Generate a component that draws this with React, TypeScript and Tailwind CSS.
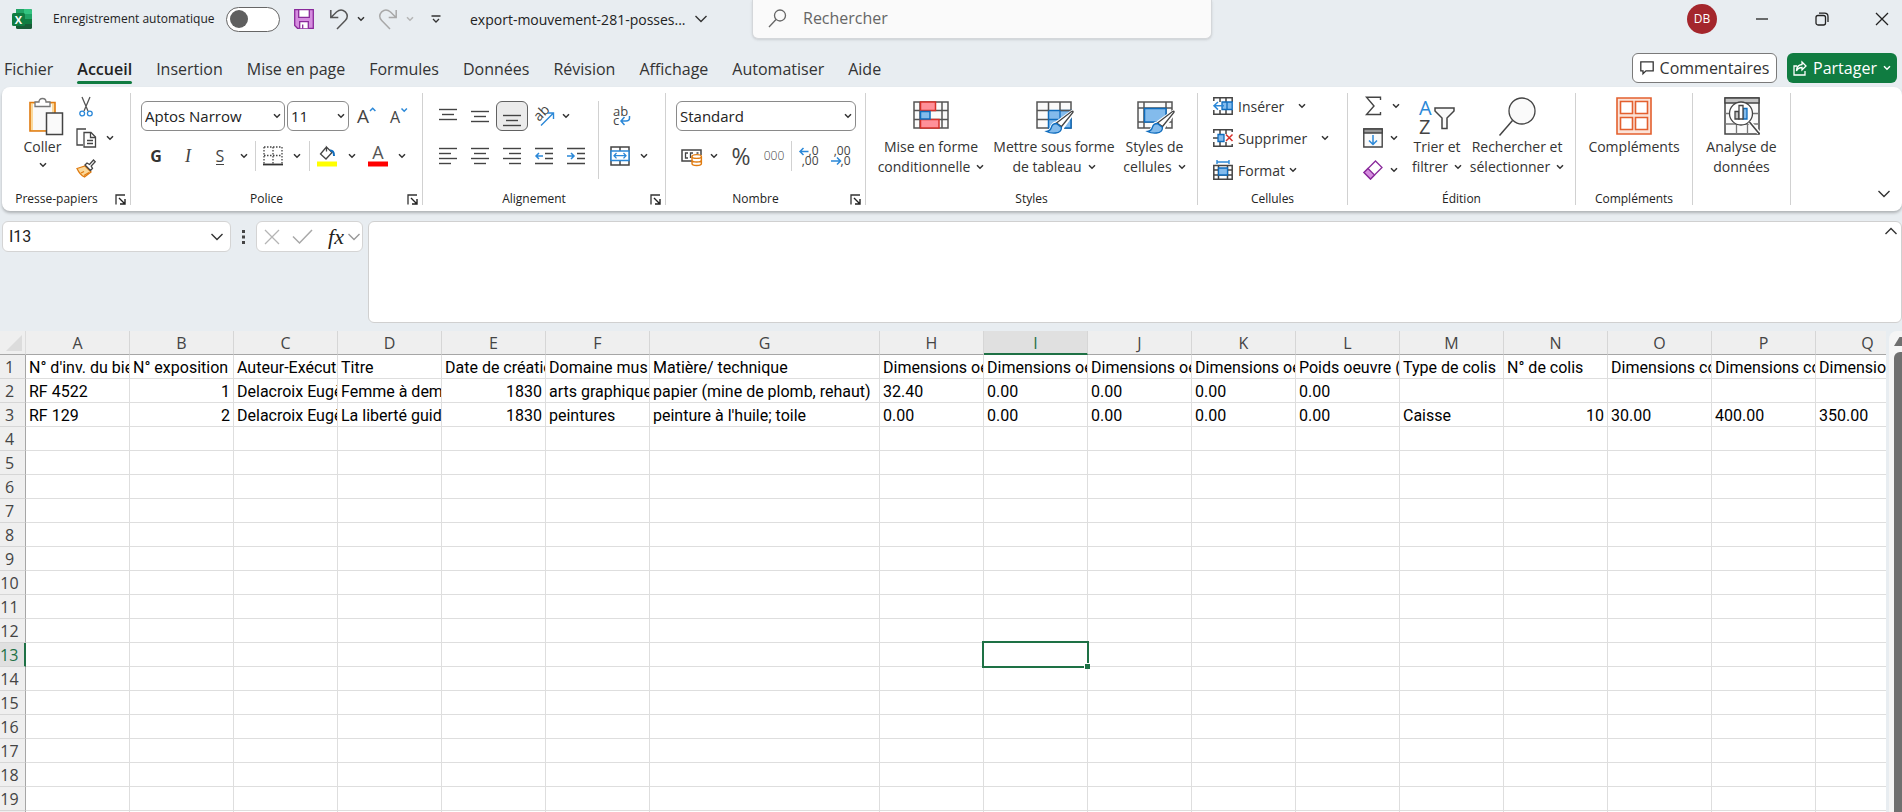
import { ReactNode } from "react";

const COLUMNS = ["A", "B", "C", "D", "E", "F", "G", "H", "I", "J", "K", "L", "M", "N", "O", "P", "Q"];
const ROW_COUNT = 20;
const ACTIVE_COLUMN = "I";
const ACTIVE_ROW = 13;

const TABS = ["Fichier", "Accueil", "Insertion", "Mise en page", "Formules", "Données", "Révision", "Affichage", "Automatiser", "Aide"];

// Cells by row number, in column order. Numbers are right aligned.
const DATA: Record<number, (string | number)[]> = {
  1: [
    "N° d'inv. du bien", "N° exposition", "Auteur-Exécutant", "Titre", "Date de création", "Domaine mus",
    "Matière/ technique", "Dimensions oeuvre", "Dimensions oeuvre", "Dimensions oeuvre", "Dimensions oeuvre",
    "Poids oeuvre (kg)", "Type de colis", "N° de colis", "Dimensions colis", "Dimensions colis", "Dimensions colis",
  ],
  2: [
    "RF 4522", 1, "Delacroix Eugène", "Femme à demi", 1830, "arts graphiques", "papier (mine de plomb, rehaut)",
    "32.40", "0.00", "0.00", "0.00", "0.00", "", "", "", "", "",
  ],
  3: [
    "RF 129", 2, "Delacroix Eugène", "La liberté guidant", 1830, "peintures", "peinture à l'huile; toile",
    "0.00", "0.00", "0.00", "0.00", "0.00", "Caisse", 10, "30.00", "400.00", "350.00",
  ],
};

function Icon({ w, h, children, className = "" }: { w: number; h: number; children: ReactNode; className?: string }) {
  return (
    <svg width={w} height={h} viewBox={`0 0 ${w} ${h}`} fill="none" stroke="#444" strokeWidth="1.3" aria-hidden="true" className={`shrink-0 overflow-visible ${className}`}>
      {children}
    </svg>
  );
}

function Chevron({ color = "#333" }: { color?: string }) {
  return (
    <Icon w={8} h={6}>
      <path d="M1 1.2 4 4.2 7 1.2" stroke={color} strokeWidth="1.5" />
    </Icon>
  );
}

function BigChevron({ color = "#333", up = false }: { color?: string; up?: boolean }) {
  return (
    <Icon w={14} h={8}>
      <path d={up ? "M1.5 7 7 1.5 12.5 7" : "M1.5 1 7 6.5 12.5 1"} stroke={color} strokeWidth="1.4" />
    </Icon>
  );
}

function Tool({ label, className = "w-8", children }: { label: string; className?: string; children: ReactNode }) {
  return (
    <button type="button" aria-label={label} className={`flex h-[30px] shrink-0 items-center justify-center ${className}`}>
      {children}
    </button>
  );
}

function Group({ label, width, launcher = false, className = "", children }: { label?: string; width: string; launcher?: boolean; className?: string; children: ReactNode }) {
  return (
    <>
      <section className={`flex shrink-0 flex-col pb-1 ${width}`}>
        <div className={`flex flex-1 ${className}`}>{children}</div>
        <div className="flex h-4 items-center text-[12px] leading-4 text-[#222]">
          <span className="flex-1 text-center">{label}</span>
          {launcher && (
            <button type="button" aria-label={`Paramètres ${label}`} className="flex w-5 justify-center">
              <Icon w={11} h={11}>
                <path d="M1 10.5V1h9" stroke="#333" />
                <path d="M4 4l5.5 5.5M10 5v5H5" stroke="#222" strokeWidth="1.4" />
              </Icon>
            </button>
          )}
        </div>
      </section>
      <div className="my-1.5 w-px shrink-0 bg-[#d1d1d1]" />
    </>
  );
}

function BigButton({ icon, lines, chevron = false, className = "" }: { icon: ReactNode; lines: string[]; chevron?: boolean; className?: string }) {
  return (
    <button type="button" className={`flex shrink-0 flex-col items-center whitespace-nowrap text-[14px] leading-5 text-[#333] ${className}`}>
      <span className="flex h-10 items-start justify-center">{icon}</span>
      {lines.map((line, i) => (
        <span key={line} className="flex items-center justify-center gap-1.5">
          {line}
          {chevron && i === lines.length - 1 && <Chevron />}
        </span>
      ))}
    </button>
  );
}

function Dropdown({ label, value, className }: { label: string; value: string; className: string }) {
  return (
    <div className={`relative h-[30px] ${className}`}>
      <select aria-label={label} defaultValue={value} className="h-full w-full appearance-none rounded-md border border-[#8a8a8a] bg-white pl-[3px] text-[15px] text-[#222] outline-none">
        <option>{value}</option>
      </select>
      <span className="pointer-events-none absolute top-3 right-1">
        <Chevron />
      </span>
    </div>
  );
}

function Lines({ rows, y = 0 }: { rows: [number, number][]; y?: number }) {
  return (
    <Icon w={18} h={20}>
      {rows.map(([start, end], i) => (
        <path key={i} d={`M${start} ${y + i * 5 + 2.5}H${end}`} stroke="#444" strokeWidth="1.4" />
      ))}
    </Icon>
  );
}

function BrushOverlay() {
  return (
    <>
      <path d="M20 26 36 14.5q2.500-1.500 1.500 1L27 30q-1 6-6.500 6.500-6 .5-10-1.500 4-1 4.500-4Q17 26 20 26Z" fill="#fff" stroke="#fff" strokeWidth="3" />
      <path d="M20.500 26 35.500 14.500q2.200-1 1.400 1L25.500 29.500Z" fill="#fff" stroke="#444" />
      <path d="M20.500 26.500q-4 0-5 3.500-1 4-5 4.500 4 2 9 1.500 6-.5 6-5.500Z" fill="#83bbec" stroke="#0f6cbd" />
    </>
  );
}

function TitleBar() {
  return (
    <header className="flex h-10 shrink-0 items-start text-[12px] text-[#222]">
      <div className="flex h-[38px] w-[752px] shrink-0 items-center pl-3">
        <Icon w={20} h={21}>
          <g stroke="none">
            <rect x="4" y="0" width="16" height="20" rx="1.500" fill="#185c37" />
            <path d="M4 0h8v7H4z" fill="#21a366" />
            <path d="M12 0h6.500Q20 0 20 1.500V5h-8z" fill="#33c481" />
            <path d="M4 5h8v5H4z" fill="#107c41" />
            <path d="M12 5h8v5h-8z" fill="#21a366" />
            <path d="M12 10h8v5h-8z" fill="#107c41" />
            <rect x="0" y="4" width="13" height="13" rx="1.500" fill="#107c41" />
            <text x="6.500" y="14.500" textAnchor="middle" fontSize="11" fontWeight="700" fill="#fff">X</text>
          </g>
        </Icon>
        <label htmlFor="autosave" className="ml-[21px] w-[173px] whitespace-nowrap">Enregistrement automatique</label>
        <input id="autosave" type="checkbox" role="switch" className="sr-only" />
        <label htmlFor="autosave" aria-label="Enregistrement automatique" className="flex h-[25px] w-[54px] items-center rounded-full border border-[#666] bg-white pl-[3px]">
          <span className="h-[18px] w-[18px] rounded-full bg-[#5f5f5f]" />
        </label>
        <button type="button" aria-label="Enregistrer" className="ml-3.5">
          <Icon w={20} h={20}>
            <path d="M.7.7h18.600v18.600H3.500L.7 16.500Z" fill="#d58ddf" stroke="#8a2a9b" />
            <path d="M4.700.7h10.600v7.600H4.700zM5.700 19.300v-6.600h8.600v6.600" fill="#fff" stroke="#8a2a9b" />
            <path d="M8.700 15.500v4" stroke="#8a2a9b" />
          </Icon>
        </button>
        <button type="button" aria-label="Annuler" className="ml-4 flex items-center gap-[9px]">
          <Icon w={18} h={21}>
            <path d="M.8 1v7.500h7.500M1.200 8.200 6.500 3Q11-.8 15.300 2.800q4 4.500 0 8.700L7 20" stroke="#555" strokeWidth="1.500" />
          </Icon>
          <Chevron />
        </button>
        <button type="button" aria-label="Rétablir" className="ml-3.5 flex items-center gap-[9px]">
          <Icon w={18} h={21}>
            <path d="M17.200 1v7.500H9.700M16.800 8.200 11.500 3Q7-.8 2.700 2.800q-4 4.500 0 8.700L11 20" stroke="#a8a8a8" strokeWidth="1.500" />
          </Icon>
          <Chevron color="#b5b5b5" />
        </button>
        <button type="button" aria-label="Personnaliser la barre d'outils" className="ml-[17px]">
          <Icon w={10} h={8}>
            <path d="M.5 1h9M2 4l3 3 3-3" stroke="#333" />
          </Icon>
        </button>
        <button type="button" className="ml-[29px] flex items-center gap-2 whitespace-nowrap text-[14px]">
          export-mouvement-281-posses...
          <BigChevron />
        </button>
      </div>
      <label className="flex h-[39px] w-[460px] shrink-0 items-center rounded-b-md border border-t-0 border-[#d4d7da] bg-[#fafafa] pb-0.5 pl-[15px] shadow-sm">
        <Icon w={19} h={19}>
          <circle cx="12" cy="6.500" r="5.500" stroke="#666" />
          <path d="M8 10.500 1 18" stroke="#666" />
        </Icon>
        <input type="search" aria-label="Rechercher" placeholder="Rechercher" className="ml-4 w-full bg-transparent text-[16px] outline-none placeholder:text-[#666]" />
      </label>
      <div className="ml-auto flex h-[38px] items-center">
        <button type="button" className="h-[30px] w-[30px] rounded-full bg-[#a4262c] text-[12px] text-white">DB</button>
        <button type="button" aria-label="Réduire" className="ml-[15px] flex w-[60px] justify-center">
          <Icon w={12} h={12}><path d="M0 6h12" stroke="#222" /></Icon>
        </button>
        <button type="button" aria-label="Niveau inférieur" className="flex w-[60px] justify-center">
          <Icon w={14} h={14}>
            <rect x="1" y="3.500" width="9.500" height="9.500" rx="2" stroke="#222" />
            <path d="M4 1.200h5.500q3.500 0 3.500 3.500V10" stroke="#222" />
          </Icon>
        </button>
        <button type="button" aria-label="Fermer" className="mr-[-10px] flex w-[60px] justify-center">
          <Icon w={14} h={14}><path d="M1 1l12 12M13 1 1 13" stroke="#222" /></Icon>
        </button>
      </div>
    </header>
  );
}

function TabBar() {
  return (
    <div className="flex h-[47px] shrink-0 items-start justify-between pt-3">
      <nav className="flex gap-6 pl-1 pt-px text-[16px] leading-8 text-[#333]">
        {TABS.map((tab) => (
          <a key={tab} href="#" className={`flex flex-col whitespace-nowrap ${tab === "Accueil" ? "font-semibold text-[#222]" : ""}`}>
            {tab}
            {tab === "Accueil" && <span className="-mt-1 h-[3px] rounded-full bg-[#107c41]" />}
          </a>
        ))}
      </nav>
      <div className="flex gap-2.5 pt-px pr-[5px] text-[16px]">
        <button type="button" className="flex h-[30px] w-[145px] items-center justify-center gap-1.5 rounded-md border border-[#7a7a7a] bg-white text-[#333]">
          <Icon w={14} h={14}>
            <path d="M.8.8h12.400v9H6L3 12.800v-3H.8Z" stroke="#333" />
          </Icon>
          Commentaires
        </button>
        <button type="button" className="flex h-[30px] w-[110px] items-center justify-center gap-1.5 rounded-md bg-[#107c41] text-white">
          <Icon w={14} h={15}>
            <path d="M4 5H1v9h11v-4M9 1l4 4-4 4V6.500Q5 6.500 3.500 10 3.500 4 9 3.500Z" stroke="#fff" />
          </Icon>
          Partager
          <Chevron color="#fff" />
        </button>
      </div>
    </div>
  );
}

function ClipboardGroup() {
  return (
    <Group label="Presse-papiers" width="w-[127px]" launcher>
      <button type="button" className="ml-1.5 flex w-[65px] flex-col items-center pt-2.5 pl-0.5 text-[14px] leading-5 text-[#333]">
        <Icon w={36} h={40} className="ml-1.5">
          <path d="M2 5.500h25V34H2z" fill="#fbd99b" stroke="#e07b10" strokeWidth="1.600" />
          <path d="M5 7h19v26H5z" fill="#fafafa" stroke="none" />
          <path d="M7 9.500V5h4q0-3.500 3.500-3.500T18 5h4v4.500z" fill="#fff" stroke="#777" />
          <path d="M18.500 16h16v21.500h-16z" fill="#fafafa" stroke="#444" strokeWidth="1.500" />
        </Icon>
        Coller
        <span className="flex h-4 items-center"><Chevron /></span>
      </button>
      <div className="flex flex-col pt-1">
        <button type="button" aria-label="Couper" className="flex h-[31px] w-6 items-center justify-center">
          <Icon w={14} h={20}>
            <path d="M3 0l6 14M11 0 5 14" stroke="#555" />
            <circle cx="3.200" cy="16.500" r="2.400" stroke="#2b88d8" />
            <circle cx="10.800" cy="16.500" r="2.400" stroke="#2b88d8" />
          </Icon>
        </button>
        <button type="button" aria-label="Copier" className="flex h-[31px] w-10 items-center justify-between pl-0.5">
          <Icon w={21} h={20}>
            <path d="M7 17H1V1h9" stroke="#444" />
            <path d="M8 4.500h7l4.500 4.500v10H8z" fill="#fff" stroke="#444" />
            <path d="M14.500 5v4.500h5M11 12.500h6M11 15.500h6" stroke="#444" />
          </Icon>
          <Chevron />
        </button>
        <button type="button" aria-label="Reproduire la mise en forme" className="flex h-[31px] w-6 items-center justify-center">
          <Icon w={20} h={19}>
            <path d="M1 9.500 9 7l6 6-6.500 5Q4 16 1 9.500Z" fill="#fbd99b" stroke="#e07b10" />
            <path d="m5 14 3-1.500M8 16.500l5-3" stroke="#e07b10" />
            <path d="m9 6 2-2 2.500 1.500L17.500 1l1.700 1.700-4 4.300 1.300 2.500-2 2z" fill="#fff" stroke="#444" />
          </Icon>
        </button>
      </div>
    </Group>
  );
}

function FontGroup() {
  return (
    <Group label="Police" width="w-[291px]" launcher className="flex-col gap-2.5 pt-3.5 pl-[9px]">
      <div className="flex">
        <Dropdown label="Police" value="Aptos Narrow" className="ml-px w-36" />
        <Dropdown label="Taille de police" value="11" className="ml-[2px] w-[62px]" />
        <Tool label="Augmenter la taille" className="ml-0.5 w-8">
          <Icon w={20} h={20}>
            <text x="0" y="17" fontSize="19" fill="#444" stroke="none">A</text>
            <path d="m13 5 2.700-2.700L18.400 5" stroke="#2b88d8" strokeWidth="1.500" />
          </Icon>
        </Tool>
        <Tool label="Réduire la taille" className="w-8">
          <Icon w={18} h={20}>
            <text x="0" y="17" fontSize="16" fill="#444" stroke="none">A</text>
            <path d="m11.500 2.500 2.700 2.700 2.700-2.700" stroke="#2b88d8" strokeWidth="1.500" />
          </Icon>
        </Tool>
      </div>
      <div className="flex items-center text-[16px] text-[#444]">
        <Tool label="Gras"><span className="font-bold text-[#333]">G</span></Tool>
        <Tool label="Italique"><span className="font-['Liberation_Serif',serif] text-[18px] italic">I</span></Tool>
        <Tool label="Souligné"><span className="border-b border-[#444] leading-4">S</span></Tool>
        <Tool label="Options de soulignement" className="w-4"><Chevron /></Tool>
        <div className="mx-[3px] h-[30px] w-px bg-[#d1d1d1]" />
        <Tool label="Bordures" className="w-7">
          <Icon w={20} h={20}>
            <path d="M1 1h18M1 1v17M19 1v17M10 1v17M1 9.500h18" strokeDasharray="1.500 1.500" stroke="#444" />
            <path d="M0 18.500h20" stroke="#333" strokeWidth="1.800" />
          </Icon>
        </Tool>
        <Tool label="Choix des bordures" className="w-5"><Chevron /></Tool>
        <div className="mx-0.5 h-[30px] w-px bg-[#d1d1d1]" />
        <Tool label="Couleur de remplissage" className="w-[30px]">
          <Icon w={20} h={22}>
            <path d="M9 2.500 3.500 9l5.500 5 6-6.500L9.500 2v4.500" stroke="#444" />
            <path d="M13 5.500q4-.5 4 5.500" stroke="#0f6cbd" strokeWidth="2" />
            <path d="M0 16.500h20v5H0z" fill="#ff0" stroke="none" />
          </Icon>
        </Tool>
        <Tool label="Choix du remplissage" className="w-5"><Chevron /></Tool>
        <Tool label="Couleur de police" className="w-8">
          <Icon w={20} h={22}>
            <text x="10" y="13.500" textAnchor="middle" fontSize="18" fill="#555" stroke="none">A</text>
            <path d="M0 16.500h20v5H0z" fill="#f00" stroke="none" />
          </Icon>
        </Tool>
        <Tool label="Choix de la couleur" className="w-4"><Chevron /></Tool>
      </div>
    </Group>
  );
}

function AlignmentGroup() {
  return (
    <Group label="Alignement" width="w-[242px]" launcher className="pt-3.5 pl-[9px]">
      <div className="flex w-[166px] flex-col gap-2.5">
        <div className="flex">
          <Tool label="Aligner en haut"><Lines rows={[[0, 18], [3, 15], [0, 18]]} y={1} /></Tool>
          <Tool label="Aligner au centre"><Lines rows={[[0, 18], [3, 15], [0, 18]]} y={3} /></Tool>
          <Tool label="Aligner en bas" className="w-8 rounded-md border border-[#616161] bg-[#ebebeb]"><Lines rows={[[0, 18], [3, 15], [0, 18]]} y={7} /></Tool>
          <Tool label="Orientation">
            <Icon w={22} h={22}>
              <text x="0" y="0" fontSize="14" fill="#444" stroke="none" transform="translate(6 17) rotate(-45)">ab</text>
              <path d="M8 20.500 20 8.500M14.500 8H20.500V14" stroke="#2b88d8" strokeWidth="1.400" />
            </Icon>
          </Tool>
          <Tool label="Choix de l'orientation" className="w-3"><Chevron /></Tool>
        </div>
        <div className="flex">
          <Tool label="Aligner à gauche"><Lines rows={[[0, 18], [0, 12], [0, 18], [0, 12]]} /></Tool>
          <Tool label="Centrer"><Lines rows={[[0, 18], [3, 15], [0, 18], [3, 15]]} /></Tool>
          <Tool label="Aligner à droite"><Lines rows={[[0, 18], [6, 18], [0, 18], [6, 18]]} /></Tool>
          <Tool label="Diminuer le retrait">
            <Icon w={18} h={20}>
              <path d="M0 2.500h18M10 7.500h8M10 12.500h8M0 17.500h18" strokeWidth="1.400" />
              <path d="M8 10H1M4 7l-3 3 3 3" stroke="#2b88d8" strokeWidth="1.500" />
            </Icon>
          </Tool>
          <Tool label="Augmenter le retrait">
            <Icon w={18} h={20}>
              <path d="M0 2.500h18M10 7.500h8M10 12.500h8M0 17.500h18" strokeWidth="1.400" />
              <path d="M0 10h7M4 7l3 3-3 3" stroke="#2b88d8" strokeWidth="1.500" />
            </Icon>
          </Tool>
        </div>
      </div>
      <div className="h-[78px] w-px bg-[#d1d1d1]" />
      <div className="flex flex-col gap-2.5 pl-[7px]">
        <Tool label="Renvoyer à la ligne">
          <Icon w={18} h={22}>
            <text x="0" y="10.500" fontSize="13" fill="#444" stroke="none">ab</text>
            <text x="0" y="20" fontSize="13" fill="#444" stroke="none">c</text>
            <path d="M16.500 11v2q0 3-3.500 3H8M11.500 12 8 16l3.500 4" stroke="#2b88d8" strokeWidth="1.500" />
          </Icon>
        </Tool>
        <div className="flex">
          <Tool label="Fusionner et centrer" className="w-7">
            <Icon w={20} h={20}>
              <path d="M1 1h18v18H1zM10 1v4M10 15v4" stroke="#444" strokeWidth="1.500" />
              <path d="M1 5h18v9.500H1z" fill="#fff" stroke="#2b88d8" strokeWidth="1.500" />
              <path d="M4 9.700h12M6.500 7 4 9.700l2.500 2.700M13.500 7 16 9.700l-2.500 2.700" stroke="#2b88d8" />
            </Icon>
          </Tool>
          <Tool label="Choix de fusion" className="w-5"><Chevron /></Tool>
        </div>
      </div>
    </Group>
  );
}

function NumberGroup() {
  return (
    <Group label="Nombre" width="w-[199px]" launcher className="flex-col gap-2.5 pt-3.5 pl-2.5">
      <Dropdown label="Format de nombre" value="Standard" className="w-[180px]" />
      <div className="flex items-center text-[#444]">
        <Tool label="Format comptabilité" className="w-[30px]">
          <Icon w={21} h={20}>
            <path d="M11 15H1V4h19v5" strokeWidth="1.500" />
            <path d="M7 7H4.500v5H7M12 7H9.500v5M15.500 7h2" />
            <path d="M11 10.500v7q0 2 4.700 2t4.700-2v-7M11 14q0 2 4.700 2t4.700-2" fill="#fff" stroke="#e07b10" strokeWidth="1.400" />
            <ellipse cx="15.700" cy="10.500" rx="4.700" ry="1.900" fill="#fff" stroke="#e07b10" strokeWidth="1.400" />
          </Icon>
        </Tool>
        <Tool label="Choix comptabilité" className="w-4"><Chevron /></Tool>
        <Tool label="Style de pourcentage" className="w-[38px]"><span className="text-[23px]">%</span></Tool>
        <Tool label="Style de milliers" className="w-7"><span className="text-[12px] font-light">000</span></Tool>
        <div className="ml-[3px] mr-0.5 h-[30px] w-px bg-[#d1d1d1]" />
        <Tool label="Ajouter une décimale" className="w-[30px]">
          <Icon w={20} h={20}>
            <text x="19.500" y="9" textAnchor="end" fontSize="12" fill="#444" stroke="none">,0</text>
            <text x="19.500" y="19" textAnchor="end" fontSize="12" fill="#444" stroke="none">,00</text>
            <path d="M9.500 5.500H1M4.500 2 1 5.500 4.500 9" stroke="#2b88d8" strokeWidth="1.500" />
          </Icon>
        </Tool>
        <Tool label="Réduire les décimales" className="w-[34px]">
          <Icon w={20} h={20}>
            <text x="19.500" y="9" textAnchor="end" fontSize="12" fill="#444" stroke="none">,00</text>
            <text x="19.500" y="19" textAnchor="end" fontSize="12" fill="#444" stroke="none">,0</text>
            <path d="M0 15h9.500M6 11.500 9.500 15 6 18.500" stroke="#2b88d8" strokeWidth="1.500" />
          </Icon>
        </Tool>
      </div>
    </Group>
  );
}

function StylesGroup() {
  return (
    <Group label="Styles" width="w-[331px]" className="justify-center gap-2 pt-2.5">
      <BigButton
        chevron
        className="w-[109px]"
        lines={["Mise en forme", "conditionnelle"]}
        icon={
          <Icon w={36} h={36}>
            <path d="M1 5h34v26H1zM1 13.500h34M1 22.500h34M7 5v26M29 5v26" fill="#fafafa" stroke="#555" strokeWidth="1.500" />
            <path d="M7.500 5h15v8.500h-15zM7.500 22.500H26V31H7.500z" fill="#ff9099" stroke="#d6302a" strokeWidth="1.500" />
            <path d="M7.500 14.500H17v7.500H7.500z" fill="#83bbec" stroke="#0f6cbd" strokeWidth="1.500" />
          </Icon>
        }
      />
      <BigButton
        chevron
        className="w-[121px]"
        lines={["Mettre sous forme", "de tableau"]}
        icon={
          <Icon w={40} h={40} className="ml-1">
            <path d="M1 5h34v26H1z" fill="#fafafa" stroke="#555" strokeWidth="1.500" />
            <path d="M12.500 13.500H35V31H12.500z" fill="#83bbec" stroke="#0f6cbd" strokeWidth="1.500" />
            <path d="M1 13.500h11.500M1 22.500h11.500M12.500 5v8.500M24 5v8.500M24 13.500h11" stroke="#555" strokeWidth="1.500" />
            <path d="M24 13.500V31M12.500 22.500H35" stroke="#0f6cbd" />
            <BrushOverlay />
          </Icon>
        }
      />
      <BigButton
        chevron
        className="w-16"
        lines={["Styles de", "cellules"]}
        icon={
          <Icon w={40} h={40} className="ml-1">
            <path d="M1 5h34v26H1zM1 11h34M1 25h34M7 5v26M29 5v26" fill="#fafafa" stroke="#555" strokeWidth="1.500" />
            <path d="M7.500 11.500H29V25H7.500z" fill="#83bbec" stroke="#0f6cbd" strokeWidth="1.500" />
            <BrushOverlay />
          </Icon>
        }
      />
    </Group>
  );
}

function CellsGroup() {
  return (
    <Group label="Cellules" width="w-[149px]" className="flex-col pt-[3px] pl-[15px] text-[14px] text-[#333]">
      <button type="button" className="flex h-8 items-center">
        <Icon w={20} h={18} className="mr-[5px]">
          <path d="M.8 4V.8h18.400V5M.8 13v4.200h18.400V13M7 .8V5M13 .8V5M7 13v4M13 13v4" stroke="#444" strokeWidth="1.500" />
          <path d="M9 5h10.200v7.500H9z" fill="#83bbec" stroke="#0f6cbd" />
          <path d="M14 5v7.500" stroke="#0f6cbd" />
          <path d="M11 8.800H1M5 5 1 8.800l4 3.800" stroke="#2b88d8" strokeWidth="1.500" />
        </Icon>
        Insérer
        <span className="ml-3.5"><Chevron /></span>
      </button>
      <button type="button" className="flex h-8 items-center">
        <Icon w={20} h={18} className="mr-[5px]">
          <path d="M.8 4V.8h18.400V3M.8 13v4.200h18.400V15M7 .8V5M13 .8V5M7 13v4M13 13v4M0 9h5" stroke="#444" strokeWidth="1.500" />
          <path d="M5 5.500h6v7H5z" fill="#83bbec" stroke="#0f6cbd" />
          <path d="m13 5.500 6.500 6.500m0-6.500L13 12" stroke="#d6302a" strokeWidth="1.500" />
        </Icon>
        Supprimer
        <span className="ml-3.5"><Chevron /></span>
      </button>
      <button type="button" className="flex h-8 items-center">
        <Icon w={20} h={20} className="mr-[5px]">
          <path d="M.8 5.500h18.400v13.700H.8zM.8 10h18.400M.8 15h18.400M5.500 5.500v13.700M14.500 5.500v13.700" stroke="#444" strokeWidth="1.500" />
          <path d="M5.500 8h9v7h-9z" fill="#83bbec" stroke="#0f6cbd" />
          <path d="M3.500 2h13M4 0v4M16 0v4" stroke="#2b88d8" strokeWidth="1.400" />
        </Icon>
        Format
        <span className="ml-1"><Chevron /></span>
      </button>
    </Group>
  );
}

function EditingGroup() {
  return (
    <Group label="Édition" width="w-[227px]" className="pl-[11px]">
      <div className="flex flex-col pt-[3px]">
        <button type="button" aria-label="Somme" className="flex h-8 w-[41px] items-center justify-between">
          <Icon w={28} h={20}>
            <path d="M21.500 4V1.200H7.500L15 10l-7.500 8.500h14V16" strokeWidth="1.400" />
          </Icon>
          <Chevron />
        </button>
        <button type="button" aria-label="Remplissage" className="flex h-8 w-[39px] items-center justify-between">
          <Icon w={28} h={20}>
            <path d="M4.800 1h18.400v18H4.800z" fill="#fafafa" strokeWidth="1.400" />
            <path d="M4.800 1h18.400v4H4.800z" fill="#999" />
            <path d="M14 7v9.500M10 12.500l4 4 4-4" stroke="#2b88d8" strokeWidth="1.500" />
          </Icon>
          <Chevron />
        </button>
        <button type="button" aria-label="Effacer" className="flex h-8 w-[39px] items-center justify-between">
          <Icon w={28} h={20}>
            <path d="M16.500 1 23 7.500 11.500 19 5 12.500Z" fill="#fff" stroke="#8a2a9b" />
            <path d="m9 8.500 6.500 6.500-4 4L5 12.500Z" fill="#d58ddf" stroke="#8a2a9b" />
          </Icon>
          <Chevron />
        </button>
      </div>
      <BigButton
        chevron
        className="ml-[11px] w-[52px] pt-2.5"
        lines={["Trier et", "filtrer"]}
        icon={
          <Icon w={38} h={40}>
            <text x="1" y="18" fontSize="20" fill="#2b88d8" stroke="none">A</text>
            <text x="1" y="37" fontSize="20" fill="#444" stroke="none">Z</text>
            <path d="M17 11h19v3l-7 7v10.500h-5V21l-7-7z" fill="#fafafa" strokeWidth="1.500" />
          </Icon>
        }
      />
      <BigButton
        chevron
        className="ml-1.5 w-24 pt-2.5"
        lines={["Rechercher et", "sélectionner"]}
        icon={
          <Icon w={38} h={40}>
            <circle cx="24" cy="14" r="13" fill="#fafafa" />
            <path d="M14.500 23.500 1.500 38.500" strokeWidth="1.500" />
          </Icon>
        }
      />
    </Group>
  );
}

function Ribbon() {
  return (
    <div className="ml-0.5 flex h-[124px] shrink-0 rounded-lg bg-white shadow-[0_2px_3px_rgba(0,0,0,0.25)]">
      <div className="w-px" />
      <ClipboardGroup />
      <FontGroup />
      <AlignmentGroup />
      <NumberGroup />
      <StylesGroup />
      <CellsGroup />
      <EditingGroup />
      <Group label="Compléments" width="w-[116px]" className="justify-center pt-2.5">
        <BigButton
          lines={["Compléments"]}
          icon={
            <Icon w={36} h={38}>
              <g stroke="#e3602f" strokeWidth="1.600" fill="#fff">
                <path d="M1 1h34v36H1z" fill="#fbe3d8" />
                <path d="M4.500 4.500h12v12h-12zM19.500 4.500h12v12h-12zM4.500 20.500h12v12h-12zM19.500 20.500h12v12h-12z" />
              </g>
            </Icon>
          }
        />
      </Group>
      <Group width="w-[97px]" className="justify-center pt-2.5">
        <BigButton
          lines={["Analyse de", "données"]}
          icon={
            <Icon w={36} h={38}>
              <path d="M1 1h34v36H1z" fill="#fafafa" strokeWidth="1.500" />
              <path d="M1 1h34v5H1z" fill="#c4c4c4" />
              <path d="M1 16.500h34M1 27h34M12.500 27v10M23.500 27v10" stroke="#777" />
              <circle cx="17" cy="16.500" r="11.500" fill="#fff" stroke="#444" />
              <path d="M25.500 25 35 36" stroke="#fff" strokeWidth="4" />
              <path d="M25.500 25 35.500 37" strokeWidth="1.600" />
              <path d="M11 14.500h4V22h-4z" fill="#c4c4c4" />
              <path d="M19 11.500h4V22h-4z" fill="#83bbec" stroke="#0f6cbd" />
              <path d="M15 8.500h4V22h-4z" fill="#fff" />
            </Icon>
          }
        />
      </Group>
      <button type="button" aria-label="Options du ruban" className="mt-auto mr-[11px] mb-[13px] ml-auto">
        <BigChevron />
      </button>
    </div>
  );
}

function FormulaBar() {
  return (
    <div className="flex shrink-0 items-start pt-2.5 pb-2 pl-0.5">
      <div className="flex h-[31px] w-[229px] shrink-0 items-center rounded-md border border-[#d4d4d4] bg-white pr-1.5 pl-1.5">
        <input aria-label="Zone Nom" defaultValue="I13" className="w-full bg-transparent font-['Roboto',sans-serif] text-[16px] text-[#222] outline-none" />
        <BigChevron />
      </div>
      <div className="flex h-[31px] w-[25px] shrink-0 items-center justify-center">
        <Icon w={3} h={14}>
          <path d="M0 0h3v3H0zM0 5.500h3v3H0zM0 11h3v3H0z" fill="#444" stroke="none" />
        </Icon>
      </div>
      <div className="flex h-[31px] w-[107px] shrink-0 items-center rounded-md border border-[#d4d4d4] bg-white pl-[7px]">
        <button type="button" aria-label="Annuler la saisie">
          <Icon w={16} h={16}><path d="m1 1 14 14M15 1 1 15" stroke="#b5b5b5" /></Icon>
        </button>
        <button type="button" aria-label="Valider la saisie" className="ml-3">
          <Icon w={21} h={15}><path d="m1 7.500 6.500 6.500L20 1" stroke="#a8a8a8" strokeWidth="1.500" /></Icon>
        </button>
        <button type="button" aria-label="Insérer une fonction" className="ml-3 w-[22px] font-['Liberation_Serif',serif] text-[22px] leading-6 text-[#222] italic">
          fx
        </button>
        <BigChevron color="#999" />
      </div>
      <div className="relative ml-[5px] flex-1">
        <textarea aria-label="Barre de formule" className="block h-[102px] w-full resize-none rounded-md border border-[#d0d0d0] bg-white p-2 outline-none" />
        <button type="button" aria-label="Réduire la barre de formule" className="absolute top-1.5 right-1">
          <BigChevron up />
        </button>
      </div>
    </div>
  );
}

function Sheet() {
  return (
    <div className="flex min-h-0 flex-1 overflow-hidden">
      <div className="min-w-0 flex-1 overflow-hidden bg-white">
        <table className="w-[1920px] table-fixed border-separate border-spacing-0 text-[16px]">
          <colgroup>
            <col className="w-[26px]" />
            {COLUMNS.map((col) => (
              <col key={col} className={col === "G" ? "w-[230px]" : "w-[104px]"} />
            ))}
          </colgroup>
          <thead>
            <tr className="h-6 bg-[#efefef] text-[#444]">
              <th className="border-r border-b border-r-[#dcdcdc] border-b-[#a6a6a6] p-0">
                <Icon w={16} h={16} className="ml-1.5">
                  <path d="M16 0v16H0z" fill="#dcdcdc" stroke="none" />
                </Icon>
              </th>
              {COLUMNS.map((col) => (
                <th
                  key={col}
                  scope="col"
                  className={`border-r border-r-[#d6d6d6] px-0 pt-0.5 pb-0 font-normal ${
                    col === ACTIVE_COLUMN ? "border-b-2 border-b-[#1e7145] bg-[#e0e0e0] leading-5 text-[#1e7145]" : "border-b border-b-[#a6a6a6] leading-[21px]"
                  }`}
                >
                  {col}
                </th>
              ))}
            </tr>
          </thead>
          <tbody className="font-['Roboto',sans-serif] text-black">
            {Array.from({ length: ROW_COUNT }, (_, i) => i + 1).map((row) => (
              <tr key={row} className="h-6">
                <th
                  scope="row"
                  className={`border-b border-b-[#d6d6d6] pt-0.5 pr-1.5 pb-0 pl-0 text-center font-['Open_Sans','Noto_Sans',sans-serif] font-normal leading-[21px] ${
                    row === ACTIVE_ROW ? "border-r-2 border-r-[#1e7145] bg-[#e0e0e0] text-[#1e7145]" : "border-r border-r-[#a6a6a6] bg-[#efefef] text-[#444]"
                  }`}
                >
                  {row}
                </th>
                {COLUMNS.map((col, c) => {
                  const value = DATA[row]?.[c] ?? "";
                  const active = row === ACTIVE_ROW && col === ACTIVE_COLUMN;
                  return (
                    <td
                      key={col}
                      className={`border-r border-b border-[#dedede] px-[3px] pt-0.5 pb-0 leading-[21px] whitespace-nowrap ${
                        typeof value === "number" ? "text-right" : "text-left"
                      } ${active ? "relative" : "overflow-hidden"}`}
                    >
                      {value}
                      {active && (
                        <span className="absolute -inset-0.5 border-2 border-[#1e7145]">
                          <span className="absolute -right-[3px] -bottom-[3px] h-1.5 w-1.5 border-t border-l border-white bg-[#1e7145]" />
                        </span>
                      )}
                    </td>
                  );
                })}
              </tr>
            ))}
          </tbody>
        </table>
      </div>
      <div className="ml-[3px] flex w-[13px] shrink-0 flex-col items-end rounded-tl-lg bg-[#f5f5f5] pt-1.5">
        <Icon w={8} h={9}><path d="M0 9 5.500 0H8v9z" fill="#6f6f6f" stroke="none" /></Icon>
        <div className="mt-1.5 w-2 flex-1 rounded-tl-md bg-[#6f6f6f]" />
      </div>
    </div>
  );
}

export default function App() {
  return (
    <div className="flex h-screen flex-col overflow-hidden bg-[#e8edf1] font-['Open_Sans','Noto_Sans',sans-serif]">
      <TitleBar />
      <TabBar />
      <Ribbon />
      <FormulaBar />
      <Sheet />
    </div>
  );
}
